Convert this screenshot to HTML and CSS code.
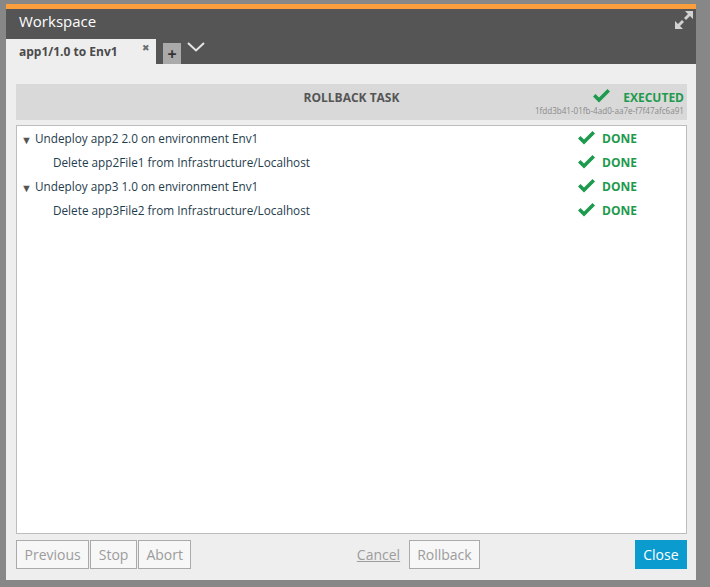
FILE: index.html
```html
<!DOCTYPE html>
<html>
<head>
<meta charset="utf-8">
<link rel="stylesheet" href="styles.css">
</head>
<body>
<div class="window">
  <div class="titlebar">
    <span class="title">Workspace</span>
    <svg class="expand" width="20" height="20" viewBox="0 0 20 20">
      <polygon points="19,1 19,9 16,6 12,10 10,8 14,4 11,1" fill="#d2d2d2"/>
      <polygon points="1,19 1,11 4,14 8,10 10,12 6,16 9,19" fill="#d2d2d2"/>
    </svg>
  </div>
  <div class="tabbar">
    <div class="tab">
      <span class="tab-label">app1/1.0 to Env1</span>
      <span class="tab-close">✖</span>
    </div>
    <div class="tab-add">+</div>
    <svg class="tab-menu" width="18" height="10" viewBox="0 0 18 10">
      <polyline points="1,1 9,8.5 17,1" fill="none" stroke="#e6e6e6" stroke-width="2"/>
    </svg>
  </div>
  <div class="content">
    <div class="band">
      <div></div>
      <div class="band-title">ROLLBACK TASK</div>
      <div class="band-status">
        <div class="executed">
          <svg class="check" width="17" height="14" viewBox="0 0 17 14"><polygon points="0,7.5 2.5,5 6,8.5 14.5,0 17,2.5 6,13.5" fill="#1e9a4e"/></svg>
          <span>EXECUTED</span>
        </div>
        <div class="task-id">1fdd3b41-01fb-4ad0-aa7e-f7f47afc6a91</div>
      </div>
    </div>
    <div class="steps">
      <div class="row">
        <div class="name"><span class="caret">▼</span>Undeploy app2 2.0 on environment Env1</div>
        <div class="state"><svg class="check" width="17" height="14" viewBox="0 0 17 14"><polygon points="0,7.5 2.5,5 6,8.5 14.5,0 17,2.5 6,13.5" fill="#1e9a4e"/></svg><span>DONE</span></div>
      </div>
      <div class="row">
        <div class="name child">Delete app2File1 from Infrastructure/Localhost</div>
        <div class="state"><svg class="check" width="17" height="14" viewBox="0 0 17 14"><polygon points="0,7.5 2.5,5 6,8.5 14.5,0 17,2.5 6,13.5" fill="#1e9a4e"/></svg><span>DONE</span></div>
      </div>
      <div class="row">
        <div class="name"><span class="caret">▼</span>Undeploy app3 1.0 on environment Env1</div>
        <div class="state"><svg class="check" width="17" height="14" viewBox="0 0 17 14"><polygon points="0,7.5 2.5,5 6,8.5 14.5,0 17,2.5 6,13.5" fill="#1e9a4e"/></svg><span>DONE</span></div>
      </div>
      <div class="row">
        <div class="name child">Delete app3File2 from Infrastructure/Localhost</div>
        <div class="state"><svg class="check" width="17" height="14" viewBox="0 0 17 14"><polygon points="0,7.5 2.5,5 6,8.5 14.5,0 17,2.5 6,13.5" fill="#1e9a4e"/></svg><span>DONE</span></div>
      </div>
    </div>
    <div class="actions">
      <div class="group">
        <button class="btn">Previous</button>
        <button class="btn">Stop</button>
        <button class="btn">Abort</button>
      </div>
      <div class="group right">
        <a class="cancel">Cancel</a>
        <button class="btn rollback">Rollback</button>
      </div>
      <button class="btn primary">Close</button>
    </div>
  </div>
</div>
</body>
</html>
```
FILE: styles.css
```css
* { box-sizing: border-box; }
html, body { margin: 0; padding: 0; }
body {
  background: #878787;
  width: 710px;
  height: 587px;
  overflow: hidden;
  font-family: "Open Sans", "Noto Sans", sans-serif;
}
.window {
  margin: 4px 0 0 6px;
  width: 690px;
  height: 576px;
  border-top: 5px solid #fb9f3c;
  background: #eeeeee;
  display: flex;
  flex-direction: column;
}
.titlebar {
  height: 30px;
  background: #555555;
  display: flex;
  align-items: center;
  justify-content: space-between;
  padding: 0 2px 0 13px;
}
.title {
  color: #ffffff;
  font-size: 15px;
  line-height: 20px;
  position: relative;
  top: -3px;
}
.expand { position: relative; top: -4px; }
.tabbar {
  height: 25px;
  background: #555555;
  display: flex;
  align-items: flex-end;
}
.tab {
  width: 150px;
  height: 25px;
  background: #eeeeee;
  display: flex;
  justify-content: space-between;
  padding: 0 6px 0 13px;
}
.tab-label {
  font-size: 12px;
  font-weight: 700;
  color: #4a4a4a;
  line-height: 25px;
}
.tab-close {
  font-size: 9px;
  color: #6d6d6d;
  line-height: 18px;
}
.tab-add {
  margin-left: 7px;
  width: 18px;
  height: 21px;
  background: #aaaaaa;
  color: #333;
  font-weight: 700;
  font-size: 16px;
  line-height: 22px;
  text-align: center;
}
.tab-menu {
  margin-left: 6px;
  align-self: flex-start;
  margin-top: 3px;
}
.content {
  flex: 1;
  display: flex;
  flex-direction: column;
  padding: 20px 9px 11px 10px;
}
.band {
  height: 36px;
  background: #d9d9d9;
  display: grid;
  grid-template-columns: 1fr auto 1fr;
  align-items: start;
}
.band-title {
  font-size: 12px;
  font-weight: 700;
  color: #555;
  line-height: 16px;
  padding-top: 6px;
}
.band-status {
  justify-self: end;
  display: flex;
  flex-direction: column;
  align-items: flex-end;
  padding: 6px 3px 0 0;
}
.executed {
  display: flex;
  align-items: center;
  color: #1e9a4e;
  font-weight: 700;
  font-size: 12px;
  line-height: 16px;
}
.executed .check { margin-right: 13px; position: relative; top: -2px; }
.task-id {
  font-size: 8.1px;
  color: #8a8a8a;
  line-height: 10px;
  margin-top: 0px;
}
.steps {
  margin-top: 5px;
  flex: 1;
  background: #fff;
  border: 1px solid #bdbdbd;
}
.row {
  display: flex;
  align-items: center;
  height: 24px;
}
.name {
  flex: 1;
  font-size: 11.75px;
  color: #1f3d4c;
  padding-left: 5px;
  display: flex;
  align-items: center;
}
.name.child { padding-left: 36px; }
.caret {
  font-size: 11px;
  color: #555;
  width: 13px;
  position: relative;
  top: 1px;
  left: -1px;
}
.state {
  width: 108px;
  display: flex;
  align-items: center;
  color: #1e9a4e;
  font-weight: 700;
  font-size: 12px;
}
.state .check { margin-right: 7px; }
.actions {
  margin-top: 6px;
  height: 29px;
  display: flex;
  align-items: stretch;
}
.group { display: flex; gap: 1px; }
.group.right {
  margin-left: auto;
  align-items: center;
  gap: 9px;
}
.btn {
  font-family: "Open Sans", "Noto Sans", sans-serif;
  font-size: 14px;
  color: #9c9c9c;
  background: #f7f7f7;
  border: 1px solid #aaaaaa;
  height: 29px;
  padding: 0 8px;
  margin: 0;
  line-height: 27px;
}
.group .btn { padding: 0 7.5px; }
.cancel {
  font-size: 14px;
  color: #9c9c9c;
  text-decoration: underline;
}
.group .rollback { padding: 0 7px; }
.primary {
  margin-left: 155px;
  background: #0b9bcf;
  border-color: #0b9bcf;
  color: #ffffff;
  padding: 0 7.5px;
}
```
